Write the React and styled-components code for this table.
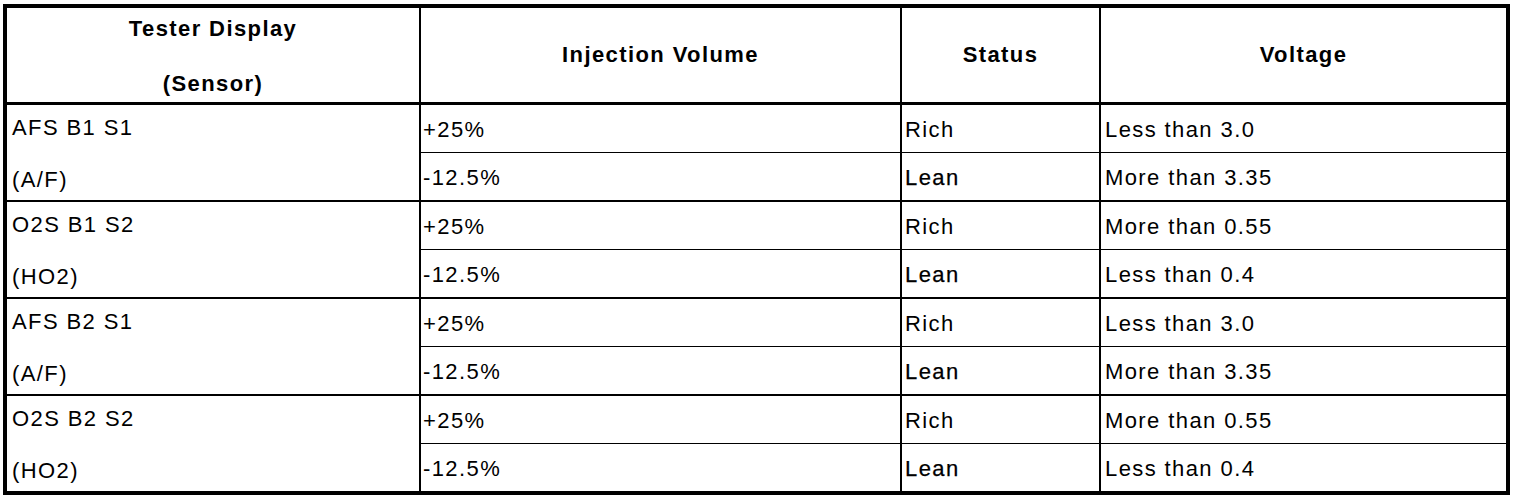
import React from "react";
import styled, { createGlobalStyle } from "styled-components";

const Global = createGlobalStyle`
  html, body { margin: 0; padding: 0; background: #fff; }
  body { font-family: "Liberation Sans", Arial, Helvetica, sans-serif; color: #000; }
`;

const Page = styled.div`
  padding: 4px 12px 0 3px;
`;

const Table = styled.table`
  width: 1503px;
  border-collapse: collapse;
  border: 4px solid #000;
  table-layout: fixed;
  font-size: 22px;
  letter-spacing: 1.4px;
`;

const HeadCell = styled.th`
  font-weight: bold;
  text-align: center;
  vertical-align: middle;
  height: 94px;
  padding: 0;
  border-left: ${(p) => (p.$first ? "none" : "2px solid #000")};
  border-bottom: 3px solid #000;
`;

const HeadLines = styled.div`
  display: flex;
  flex-direction: column;
  gap: 30px;
  line-height: 25px;
  padding-top: 1px;
`;

const SensorCell = styled.td`
  vertical-align: top;
  padding: 0 0 0 5px;
  border-bottom: 2px solid #000;
  line-height: 24px;
`;

const SensorLines = styled.div`
  display: flex;
  flex-direction: column;
  gap: 28px;
  padding-top: 11px;
`;

const Cell = styled.td`
  height: 44px;
  line-height: 24px;
  padding: 3px 0 0 ${(p) => p.$pad}px;
  vertical-align: middle;
  border-left: 2px solid #000;
  border-bottom: ${(p) => (p.$last ? 2 : 1)}px solid #000;
  -webkit-text-stroke: ${(p) => (p.$strong ? "0.25px #000" : "0")};
`;

const groups = [
  { name: "AFS B1 S1", sub: "(A/F)", rich: "Less than 3.0", lean: "More than 3.35" },
  { name: "O2S B1 S2", sub: "(HO2)", rich: "More than 0.55", lean: "Less than 0.4" },
  { name: "AFS B2 S1", sub: "(A/F)", rich: "Less than 3.0", lean: "More than 3.35" },
  { name: "O2S B2 S2", sub: "(HO2)", rich: "More than 0.55", lean: "Less than 0.4" },
];

export default function App() {
  return (
    <>
      <Global />
      <Page>
        <Table>
          <colgroup>
            <col style={{ width: 415 }} />
            <col style={{ width: 481 }} />
            <col style={{ width: 199 }} />
            <col style={{ width: 408 }} />
          </colgroup>
          <thead>
            <tr>
              <HeadCell $first>
                <HeadLines>
                  <span>Tester Display</span>
                  <span>(Sensor)</span>
                </HeadLines>
              </HeadCell>
              <HeadCell>Injection Volume</HeadCell>
              <HeadCell>Status</HeadCell>
              <HeadCell>Voltage</HeadCell>
            </tr>
          </thead>
          <tbody>
            {groups.map((g, i) => (
              <React.Fragment key={i}>
                <tr>
                  <SensorCell rowSpan={2}>
                    <SensorLines>
                      <span>{g.name}</span>
                      <span>{g.sub}</span>
                    </SensorLines>
                  </SensorCell>
                  <Cell $pad={2}>+25%</Cell>
                  <Cell $pad={3}>Rich</Cell>
                  <Cell $pad={4}>{g.rich}</Cell>
                </tr>
                <tr>
                  <Cell $pad={2} $last>-12.5%</Cell>
                  <Cell $pad={3} $last $strong>Lean</Cell>
                  <Cell $pad={4} $last>{g.lean}</Cell>
                </tr>
              </React.Fragment>
            ))}
          </tbody>
        </Table>
      </Page>
    </>
  );
}
